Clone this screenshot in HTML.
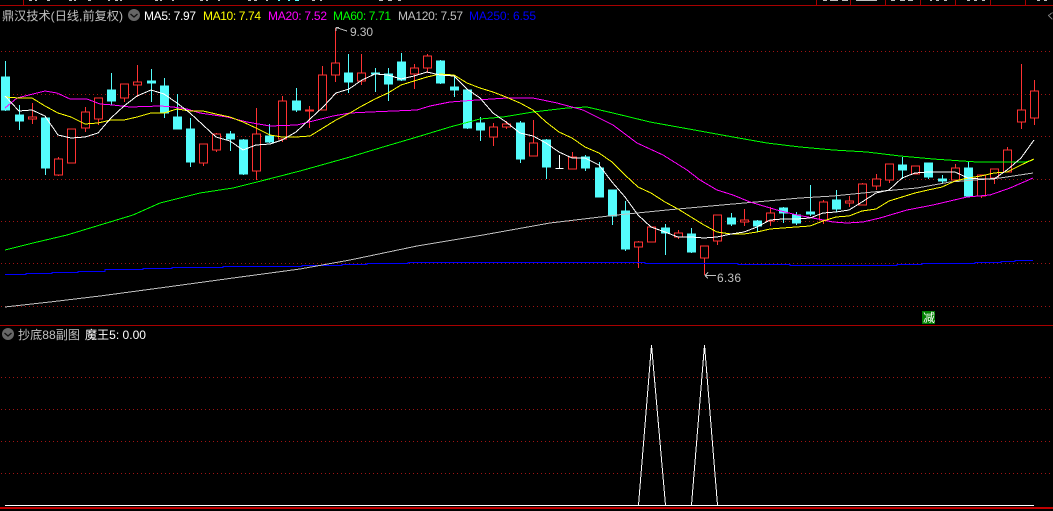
<!DOCTYPE html>
<html><head><meta charset="utf-8"><title>鼎汉技术</title>
<style>
html,body{margin:0;padding:0;background:#000;width:1053px;height:511px;overflow:hidden}
svg{display:block}
text{font-family:"Liberation Sans","WenQuanYi Zen Hei","Noto Sans CJK SC",sans-serif;font-size:12px}
</style></head><body>
<svg width="1053" height="511" viewBox="0 0 1053 511" xmlns="http://www.w3.org/2000/svg">
<rect width="1053" height="511" fill="#000"/>
<g shape-rendering="crispEdges" fill="none">
<!-- top fragments -->
<path stroke="#c0c0c0" d="M29 0.5h3M35 0.5h2M47 0.5h3M69 0.5h3M74 0.5h2M88 0.5h3M108 0.5h2M115 0.5h3M120 0.5h2M155 0.5h3M160 0.5h2M172 0.5h2M200 0.5h3M206 0.5h2M218 0.5h2M248 0.5h3M254 0.5h3M266 0.5h2M312 0.5h3M320 0.5h2M379 0.5h4M388 0.5h4M398 0.5h3M823 0.5h4M830 0.5h8M842 0.5h6M856 0.5h21M891 0.5h4M900 0.5h5M908 0.5h5M930 0.5h2M936 0.5h3M944 0.5h3M967 0.5h3M974 0.5h3M982 0.5h3M1037 0.5h3M1044 0.5h3"/>
<path stroke="#54fcfc" d="M278 0.5h2M288 0.5h2M295 0.5h4"/>
<!-- frame -->
<path stroke="#a80000" d="M0 5.5H1053M23.5 0V5M816.5 0V5M850.5 0V5M885.5 0V5M920.5 0V5M955.5 0V5M990.5 0V5M1025.5 0V5M0 325.5H1053"/>
<path stroke="#c00000" stroke-width="2" d="M0 508H1053"/>
<!-- grid -->
<path stroke="#a01414" stroke-dasharray="1 3" d="M1 51.5H1053M1 94.5H1053M1 136.5H1053M1 179.5H1053M1 221.5H1053M1 263.5H1053M1 306.5H1053M1 377.5H1053M1 409.5H1053M1 441.5H1053M1 473.5H1053"/>
<!-- cyan candles -->
<path stroke="#54fcfc" fill="#54fcfc" d="
M1.5 77h8v33h-8zM5.5 61V77M5.5 110V111
M15.5 115h8v6h-8zM19.5 105V115M19.5 121V130
M41.5 118h8v50h-8zM45.5 168V175
M107.5 90h8v11h-8zM111.5 73V90M111.5 101V105
M147.5 81h8v2h-8zM151.5 69V81M151.5 83V102
M160.5 86h8v27h-8zM164.5 78V86M164.5 113V118
M173.5 117h8v12h-8zM177.5 94V117
M186.5 129h8v33h-8zM190.5 118V129M190.5 162V167
M226.5 134h8v5h-8zM230.5 131V134M230.5 139V151
M239.5 140h8v34h-8zM243.5 139V140M243.5 174V175
M265.5 136h8v6h-8zM269.5 124V136M269.5 142V143
M292.5 101h8v9h-8zM296.5 88V101M296.5 110V112
M344.5 73h8v9h-8zM348.5 54V73M348.5 82V93
M371.5 73h8v1h-8zM375.5 68V73M375.5 74V92
M384.5 74h8v10h-8zM388.5 68V74M388.5 84V101
M397.5 62h8v18h-8zM401.5 53V62M401.5 80V81
M436.5 61h8v22h-8zM440.5 60V61M440.5 83V84
M450.5 87h8v3h-8zM454.5 75V87M454.5 90V97
M463.5 90h8v38h-8zM467.5 128V129
M476.5 123h8v7h-8zM480.5 117V123M480.5 130V141
M516.5 123h8v36h-8zM520.5 121V123M520.5 159V163
M542.5 140h8v27h-8zM546.5 139V140M546.5 167V179
M581.5 157h8v11h-8zM585.5 155V157M585.5 168V171
M595.5 168h8v29h-8zM599.5 162V168
M608.5 190h8v26h-8zM612.5 216V225
M621.5 211h8v38h-8zM625.5 201V211M625.5 249V251
M661.5 228h8v5h-8zM665.5 224V228M665.5 233V255
M687.5 234h8v18h-8zM691.5 228V234M691.5 252V253
M727.5 218h8v6h-8zM731.5 213V218M731.5 224V226
M753.5 221h8v5h-8zM757.5 220V221M757.5 226V232
M779.5 208h8v5h-8zM783.5 207V208M783.5 213V223
M792.5 215h8v8h-8zM796.5 212V215M796.5 223V225
M806.5 212h8v2h-8zM810.5 185V212M810.5 214V216
M832.5 200h8v9h-8zM836.5 190V200M836.5 209V212
M898.5 165h8v5h-8zM902.5 157V165M902.5 170V179
M924.5 163h8v14h-8zM928.5 177V179
M938.5 179h8v2h-8zM942.5 175V179M942.5 181V184
M964.5 168h8v28h-8zM968.5 162V168M968.5 196V197"/>
<!-- red candles -->
<path stroke="#ff3232" fill="#000" d="
M28.5 117h8v2h-8zM32.5 103V117M32.5 119V124
M54.5 159h8v16h-8zM58.5 157V159M58.5 175V176
M67.5 129h8v34h-8z
M81.5 112h8v16h-8zM85.5 107V112M85.5 128V132
M94.5 98h8v21h-8zM98.5 119V125
M120.5 84h8v14h-8zM124.5 98V102
M133.5 82h8v3h-8zM137.5 65V82M137.5 85V97
M199.5 144h8v19h-8zM203.5 163V166
M212.5 134h8v16h-8zM216.5 133V134M216.5 150V152
M252.5 134h8v37h-8zM256.5 108V134M256.5 171V180
M278.5 101h8v38h-8zM282.5 96V101M282.5 139V142
M305.5 110h8v1h-8zM309.5 106V110M309.5 111V128
M318.5 75h8v35h-8zM322.5 66V75
M331.5 63h8v12h-8zM335.5 28V63M335.5 75V82
M357.5 73h8v8h-8zM361.5 54V73M361.5 81V85
M410.5 68h8v6h-8zM414.5 64V68M414.5 74V89
M423.5 56h8v12h-8zM427.5 54V56M427.5 68V73
M489.5 127h8v10h-8zM493.5 123V127M493.5 137V146
M502.5 124h8v3h-8zM506.5 121V124M506.5 127V129
M529.5 143h8v13h-8zM533.5 120V143
M568.5 157h8v12h-8zM572.5 152V157
M634.5 242h8v5h-8zM638.5 241V242M638.5 247V268
M647.5 227h8v15h-8z
M674.5 233h8v4h-8zM678.5 230V233M678.5 237V239
M700.5 246h8v12h-8zM704.5 258V275
M713.5 215h8v26h-8zM717.5 241V245
M740.5 220h8v2h-8zM744.5 209V220M744.5 222V226
M766.5 213h8v8h-8zM770.5 207V213M770.5 221V226
M819.5 202h8v18h-8zM823.5 200V202M823.5 220V224
M845.5 201h8v2h-8zM849.5 196V201M849.5 203V207
M858.5 184h8v21h-8zM862.5 183V184
M872.5 179h8v7h-8zM876.5 174V179M876.5 186V190
M885.5 164h8v16h-8zM889.5 180V183
M911.5 166h8v8h-8z
M951.5 168h8v12h-8zM955.5 164V168
M977.5 175h8v21h-8zM981.5 196V198
M990.5 169h8v9h-8zM994.5 178V184
M1003.5 150h8v22h-8zM1007.5 147V150
M1017.5 110h8v12h-8zM1021.5 64V110M1021.5 122V129
M1030.5 91h8v27h-8zM1034.5 80V91M1034.5 118V125"/>
<!-- white doji -->
<path stroke="#fff" d="M555.5 168.5h8M559.5 155V168"/>
<!-- MA250 -->
<path stroke="#0000ff" d="M5 274.5H26V273.5H52V272.5H78V271.5H105V269.5H143V268.5H172V267.5H223V266.5H302V265.5H342V264.5H367V263.5H408V262.5H645V263.5H738V264.5H790V265.5H897V264.5H922V263.5H975V262.5H1001V261.5H1015V260.5H1033"/>
<!-- MA120 -->
<polyline stroke="#c0c0c0" points="5,307 50,302 100,296 167,287 233,278 300,269 350,260 417,246 483,235 550,223 617,215 667,210 700,207 733,204 767,201 800,198 833,196 873,192 917,188 950,182 1000,178 1033,173"/>
<!-- MA60 -->
<polyline stroke="#00ff00" points="5,250 33,243 67,235 100,225 133,215 160,203 200,193 233,188 257,182 300,171 350,157 383,147 417,137 450,127 480,119 503,117 533,112 567,108 587,107 613,113 650,122 700,131 733,137 767,143 800,147 833,150 867,152 900,156 933,159 977,162 1025,162 1033,160"/>
<!-- MA20 -->
<polyline stroke="#ff00ff" points="5,108 17,98 33,94 45,91 57,93 70,99 87,99 100,104 113,105 130,107 160,106 173,107 187,109 200,113 227,117 247,122 270,126 297,125 317,120 333,116 350,113 370,112 417,110 430,106 450,102 477,100 507,98 533,98 557,103 583,110 613,125 637,143 663,155 687,170 700,180 717,190 733,195 750,202 777,210 797,215 813,218 833,222 847,223 863,222 880,218 907,210 933,205 967,197 990,195 1010,188 1033,178"/>
<!-- MA10 -->
<polyline stroke="#ffff00" points="5,97 19,98 32,98 45,106 58,113 71,117 85,124 98,123 111,120 124,120 137,117 151,113 164,113 177,109 190,111 203,111 216,114 230,117 243,122 256,128 270,135 282,137 296,137 310,136 323,128 336,120 350,113 360,107 375,99 388,93 401,85 414,81 427,77 440,74 454,75 467,83 480,88 493,92 506,97 520,103 533,110 546,122 559,132 572,138 585,147 599,153 612,162 625,175 638,187 651,193 665,202 678,209 691,217 704,225 717,232 731,234 744,234 757,232 770,229 783,228 796,227 810,226 823,221 836,217 849,216 862,211 876,209 889,201 902,197 915,193 928,190 942,187 955,181 968,178 981,176 994,173 1007,172 1021,165 1034,159"/>
<!-- MA5 -->
<polyline stroke="#ffffff" points="5,96 19,111 32,110 45,116 58,135 71,138 85,137 98,133 111,118 124,106 137,96 151,90 164,94 177,103 190,113 203,125 216,137 230,141 243,150 256,145 270,144 282,140 296,132 310,119 323,107 336,93 349,89 362,80 375,74 388,75 401,79 414,76 427,72 440,75 454,76 467,89 480,98 493,113 506,122 520,133 533,136 546,143 559,152 572,158 585,158 599,165 612,182 625,197 638,215 651,227 665,232 678,237 691,237 704,238 717,237 731,234 744,232 757,227 770,220 783,219 796,219 810,218 823,213 836,212 849,210 862,202 876,193 889,190 902,178 915,173 928,172 942,172 955,172 968,178 981,179 994,179 1007,170 1021,158 1034,140"/>
<!-- Markers -->
<path stroke="#c0c0c0" d="M336 27.5L347 31M336 27.5H339M336 27.5V31"/>
<path stroke="#c0c0c0" d="M705 275.5H716M705 275.5L708 272.5M705 275.5L708 278.5"/>
<path stroke="#777" d="M1052.5 12.5L1048.5 15.5L1052.5 19.5"/>
<!-- Sub chart -->
<path stroke="#fff" d="M5 505.5H1034"/>
<polyline stroke="#fff" points="638.5,505 651.5,345 665.5,505"/>
<polyline stroke="#fff" points="691.5,505 704.5,345 717.5,505"/>
<rect x="922" y="311" width="13" height="13" fill="#008000"/>
</g>
<!-- buttons -->
<circle cx="134" cy="15" r="6" fill="#666"/>
<path d="M130.5 14l3.5 3 3.5-3" stroke="#111" stroke-width="1.3" fill="none"/>
<circle cx="8" cy="334" r="6" fill="#666"/>
<path d="M4.5 333l3.5 3 3.5-3" stroke="#111" stroke-width="1.3" fill="none"/>
<!-- labels -->
<text x="2" y="20" fill="#c0c0c0" textLength="121" lengthAdjust="spacingAndGlyphs">鼎汉技术(日线,前复权)</text>
<text x="144" y="20" fill="#fff" textLength="52">MA5: 7.97</text>
<text x="203" y="20" fill="#ffff00" textLength="58">MA10: 7.74</text>
<text x="268" y="20" fill="#ff00ff" textLength="59">MA20: 7.52</text>
<text x="333" y="20" fill="#00ff00" textLength="58">MA60: 7.71</text>
<text x="398" y="20" fill="#c0c0c0" textLength="65">MA120: 7.57</text>
<text x="469" y="20" fill="#0000ff" textLength="67">MA250: 6.55</text>
<text x="350" y="36" fill="#c0c0c0" textLength="23">9.30</text>
<text x="717" y="282" fill="#c0c0c0" textLength="24">6.36</text>
<text x="923" y="322" fill="#fff">减</text>
<text x="18" y="339" fill="#c0c0c0" textLength="62" lengthAdjust="spacingAndGlyphs">抄底88副图</text>
<text x="85" y="339" fill="#fff" textLength="61" lengthAdjust="spacingAndGlyphs">魔王5: 0.00</text>
</svg>
</body></html>
